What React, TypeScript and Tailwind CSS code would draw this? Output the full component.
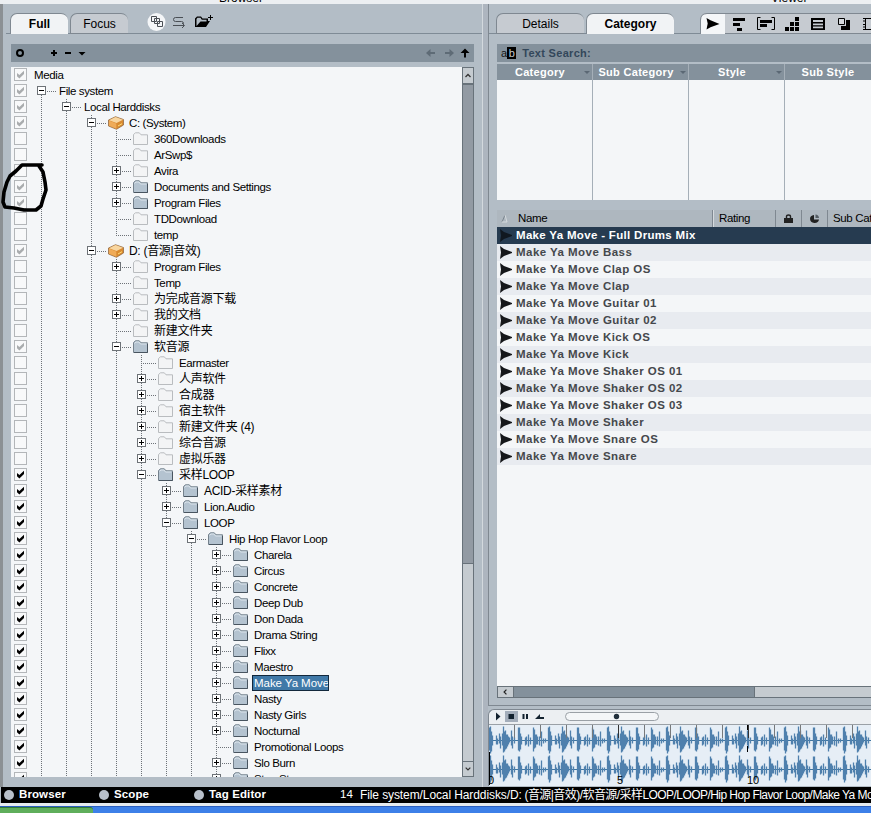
import React from 'react';
import { clsx } from 'clsx';

type Check = 'off' | 'partial' | 'on';
type Icon = 'none' | 'drive' | 'empty' | 'folder';

interface Node {
  level: number;
  label: string;
  icon: Icon;
  check: Check;
  sign?: '+' | '-';
  last?: boolean;
}

const n = (level: number, label: string, icon: Icon, check: Check, sign?: '+' | '-', last?: boolean): Node => ({
  level, label, icon, check, sign, last,
});

const nodes: Node[] = [
  n(0, 'Media', 'none', 'partial'),
  n(1, 'File system', 'none', 'partial', '-'),
  n(2, 'Local Harddisks', 'none', 'partial', '-'),
  n(3, 'C: (System)', 'drive', 'partial', '-'),
  n(4, '360Downloads', 'empty', 'off'),
  n(4, 'ArSwp$', 'empty', 'off'),
  n(4, 'Avira', 'empty', 'off', '+'),
  n(4, 'Documents and Settings', 'folder', 'partial', '+'),
  n(4, 'Program Files', 'folder', 'partial', '+'),
  n(4, 'TDDownload', 'empty', 'off'),
  n(4, 'temp', 'empty', 'off', undefined, true),
  n(3, 'D: (音源|音效)', 'drive', 'partial', '-'),
  n(4, 'Program Files', 'empty', 'off', '+'),
  n(4, 'Temp', 'empty', 'off'),
  n(4, '为完成音源下载', 'empty', 'off', '+'),
  n(4, '我的文档', 'empty', 'off', '+'),
  n(4, '新建文件夹', 'empty', 'off'),
  n(4, '软音源', 'folder', 'partial', '-'),
  n(5, 'Earmaster', 'empty', 'off'),
  n(5, '人声软件', 'empty', 'off', '+'),
  n(5, '合成器', 'empty', 'off', '+'),
  n(5, '宿主软件', 'empty', 'off', '+'),
  n(5, '新建文件夹 (4)', 'empty', 'off', '+'),
  n(5, '综合音源', 'empty', 'off', '+'),
  n(5, '虚拟乐器', 'empty', 'off', '+'),
  n(5, '采样LOOP', 'folder', 'on', '-'),
  n(6, 'ACID-采样素材', 'folder', 'on', '+'),
  n(6, 'Lion.Audio', 'folder', 'on', '+'),
  n(6, 'LOOP', 'folder', 'on', '-'),
  n(7, 'Hip Hop Flavor Loop', 'folder', 'on', '-'),
  n(8, 'Charela', 'folder', 'on', '+'),
  n(8, 'Circus', 'folder', 'on', '+'),
  n(8, 'Concrete', 'folder', 'on', '+'),
  n(8, 'Deep Dub', 'folder', 'on', '+'),
  n(8, 'Don Dada', 'folder', 'on', '+'),
  n(8, 'Drama String', 'folder', 'on', '+'),
  n(8, 'Flixx', 'folder', 'on', '+'),
  n(8, 'Maestro', 'folder', 'on', '+'),
  n(8, 'Make Ya Move', 'folder', 'on', '+'),
  n(8, 'Nasty', 'folder', 'on', '+'),
  n(8, 'Nasty Girls', 'folder', 'on', '+'),
  n(8, 'Nocturnal', 'folder', 'on', '+'),
  n(8, 'Promotional Loops', 'folder', 'on'),
  n(8, 'Slo Burn', 'folder', 'on', '+'),
  n(8, 'Stop Stress', 'folder', 'on', '+'),
];

const files = [
  'Make Ya Move - Full Drums Mix',
  'Make Ya Move Bass',
  'Make Ya Move Clap OS',
  'Make Ya Move Clap',
  'Make Ya Move Guitar 01',
  'Make Ya Move Guitar 02',
  'Make Ya Move Kick OS',
  'Make Ya Move Kick',
  'Make Ya Move Shaker OS 01',
  'Make Ya Move Shaker OS 02',
  'Make Ya Move Shaker OS 03',
  'Make Ya Move Shaker',
  'Make Ya Move Snare OS',
  'Make Ya Move Snare',
];

const dotsV = 'bg-[repeating-linear-gradient(to_bottom,#6d7278_0_1px,transparent_1px_2px)]';
const dotsH = 'bg-[repeating-linear-gradient(to_right,#6d7278_0_1px,transparent_1px_2px)]';

function CheckBox({ state }: { state: Check }) {
  return (
    <div className="w-[13px] h-[13px] mt-px ml-[3px] shrink-0 border border-[#b3b6b9] bg-[#f8f9fa]">
      {state !== 'off' && (
        <svg width="11" height="11" viewBox="0 0 11 11" className="block">
          <path d="M2 4 L4.4 6 L9 1.8 V5 L4.4 9.4 L2 7.2 Z" fill={state === 'on' ? '#000' : '#a9acae'} />
        </svg>
      )}
    </div>
  );
}

function Folder({ open }: { open: boolean }) {
  return (
    <svg width="16" height="14" viewBox="0 0 16 14" className="shrink-0">
      <path
        d="M.5 12.5 V2.5 L2.5 .8 H6.3 L8 2.8 H14.5 V12.5 Z"
        fill={open ? '#b4c3d0' : '#f3f4f5'}
        stroke={open ? '#74818c' : '#b9bcbf'}
      />
      {open && <path d="M1.5 3.5 L3 2 H6 L7.5 4 H13.5" fill="none" stroke="#dbe4eb" />}
      {open && <path d="M1 12.500 H14.500 V4" fill="none" stroke="#48545f" />}
    </svg>
  );
}

function Drive() {
  return (
    <svg width="16" height="14" viewBox="0 0 16 14" className="shrink-0">
      <path d="M0.5 4 L7.5 .7 L15.5 3.5 V9 L8.5 13.3 L.5 10 Z" fill="#d98a30" stroke="#8a6038" strokeWidth=".7" />
      <path d="M1 4.2 L7.5 1 L15 3.7 L8.5 7 Z" fill="#f8d6a0" />
      <path d="M1 4.6 L8.3 7.4 V12.8 L1 9.7 Z" fill="#efab58" />
      <path d="M10 10 L14 7.7" stroke="#ffe07a" />
    </svg>
  );
}

function Branch({ node }: { node: Node }) {
  return (
    <div className={clsx('relative h-4 shrink-0', node.icon === 'none' ? 'w-[22px]' : 'w-[21px]')}>
      {node.level > 1 && <i className={clsx('absolute left-1 top-0 w-px h-2', dotsV)} />}
      {!node.last && <i className={clsx('absolute left-1 top-2 w-px h-2', dotsV)} />}
      <i className={clsx('absolute left-1 top-2 h-px w-[15px]', dotsH)} />
      {node.sign && (
        <svg width="9" height="9" viewBox="0 0 9 9" className="absolute left-0 top-[3px]">
          <rect x=".5" y=".5" width="8" height="8" fill="#fff" stroke="#6d7277" />
          <path d={node.sign === '+' ? 'M2 4.5h5M4.5 2v5' : 'M2 4.5h5'} stroke="#000" />
        </svg>
      )}
    </div>
  );
}

function TreeRow({ node }: { node: Node }) {
  const selected = node.label === 'Make Ya Move';
  const cjk = /[\u4e00-\u9fff]/.test(node.label);
  return (
    <div className="flex h-4 shrink-0">
      <CheckBox state={node.check} />
      <div className={clsx('shrink-0', node.level === 0 ? 'w-[7px]' : 'w-[10px]')} />
      {Array.from({ length: Math.max(0, node.level - 1) }, (_, i) => (
        <div key={i} className="w-[25px] h-4 pl-1 shrink-0">
          <div className={clsx('w-px h-4', dotsV)} />
        </div>
      ))}
      {node.level > 0 && <Branch node={node} />}
      {node.icon !== 'none' && (
        <div className="w-[19px] pt-px shrink-0 flex">
          {node.icon === 'drive' ? <Drive /> : <Folder open={node.icon === 'folder'} />}
        </div>
      )}
      <span
        className={clsx(
          'h-4 leading-4 whitespace-nowrap',
          cjk ? 'text-[12px] tracking-[-0.3px]' : 'text-[11.5px]',
          !cjk && (selected ? 'tracking-[-0.05px]' : 'tracking-[-0.38px]'),
          node.icon !== 'none' && 'pl-[2px]',
          selected && 'bg-[#4079a8] text-white outline outline-1 -outline-offset-1 outline-[#12283c]'
        )}
      >
        {node.label}
      </span>
    </div>
  );
}

function Tab({ label, active, className }: { label: string; active?: boolean; className: string }) {
  return (
    <div
      className={clsx(
        'h-[21px] rounded-t-[7px] border-t border-l border-[#7f8891] text-center leading-[21px] text-[12px]',
        active ? 'bg-[#f1f3f5] font-bold' : 'bg-[#c6cbd1] border-b',
        className
      )}
    >
      {label}
    </div>
  );
}

function BrowserPanel() {
  return (
    <section className="w-[482px] h-[783px] shrink-0 flex flex-col bg-[#b3bdc6] border-l-[3px] border-[#8b9094] pl-2">
      <div className="h-[30px] flex pt-[9px] border-b border-[#7f8b96] -ml-[5px] pl-1">
        <Tab label="Full" active className="w-[58px]" />
        <Tab label="Focus" className="w-[58px] ml-[2px]" />
        <svg width="90" height="21" viewBox="0 0 90 21" className="ml-[14px]">
          <circle cx="14.500" cy="9" r="9" fill="#f4f6f8" />
          <g fill="none" stroke="#4a4f55">
            <path d="M9.500 3.500h5v5h-5zM12.500 5.500h5v5h-5zM15.500 8.500h5v5h-5z" />
            <path d="M41 4.500h-7.500q-2 0-2 2t2 2h6q2 0 2 2v1M31 12.500h11" />
            <path d="M40 10l2.500 2.500-2.500 2.500" />
          </g>
          <path d="M53 14V5.500l2-2h4l1.500 2h5.500V8h2l-4 6z" fill="#000" />
          <path d="M54.500 6l1-1.300h3l1.300 2h4.700v1.800h-6l-4 4.500z" fill="#b3bdc6" />
          <path d="M68.500 2v5M66 4.500h5" stroke="#000" />
        </svg>
      </div>
      <div className="h-[18px] mt-[10px] w-[463px] bg-[#84919c]">
        <svg width="463" height="18" viewBox="0 0 463 18">
          <circle cx="9" cy="9" r="3" fill="none" stroke="#000" strokeWidth="2" />
          <path d="M40 9h6M43 6v6M54 9h6" stroke="#000" strokeWidth="2" />
          <path d="M67.500 8h7l-3.500 3.500z" />
          <path d="M419 5v3h-4v0l-.5 1 5 4.500v-3.500h4.500v-2h-4.500v-3z" fill="none" />
          <path d="M419.500 5l-4.500 4 4.500 4v-3h4.500v-2h-4.500zM438.500 5l4.500 4-4.500 4v-3h-4.500v-2h4.500z" fill="#5e6b76" />
          <path d="M454 4.500l4.500 4.500h-3.500v4.500h-2v-4.500h-3.500z" />
        </svg>
      </div>
      <div className="h-[710px] mt-[5px] w-[463px] flex">
        <div className="flex-1 bg-[#f4f6f8] overflow-hidden flex flex-col">
          {nodes.map((node, i) => (
            <TreeRow key={i} node={node} />
          ))}
        </div>
        <div className="w-3 flex flex-col border border-[#68727a] bg-[#c5cbd0]">
          <svg width="10" height="15" viewBox="0 0 10 15" className="shrink-0">
            <path d="M2.500 9l2.500-2.500 2.500 2.500" fill="none" stroke="#333" strokeWidth="1.300" />
          </svg>
          <div className="h-[481px] bg-[#929aa3] border-t-2 border-b border-[#68727a]" />
          <div className="flex-1" />
          <svg width="10" height="15" viewBox="0 0 10 15" className="shrink-0 border-t border-[#68727a]">
            <path d="M2.500 6l2.500 2.500 2.500-2.500" fill="none" stroke="#333" strokeWidth="1.300" />
          </svg>
        </div>
      </div>
    </section>
  );
}

function ViewToolbar() {
  return (
    <svg width="171" height="21" viewBox="0 0 171 21" className="ml-[26px] shrink-0">
      <path d="M0 21V7q0-7 7-7H171V21z" fill="#c6cbd1" />
      <path d="M1 21V7q0-6 6-6H25V21z" fill="#f4f6f8" />
      <path d="M.5 21V7q0-6.500 6.500-6.500H171" fill="none" stroke="#7f8891" />
      <path d="M25 20.500H171" stroke="#7f8891" />
      <path d="M6.500 5l4 2.300 9 3.700-9 3.300-4 2.200 1.200-6z" />
      <path d="M33 5h12v3H33zM33 10h7v3h-7zM37 15h5v3h-5z" />
      <path d="M60.500 4.500h-3v12h3M71.500 4.500h3v12h-3" fill="none" stroke="#000" />
      <path d="M60 7h12v3H60zM60 11h7v3h-7z" />
      <path d="M85 14h4v4h-4zM90 14h4v4h-4zM95 14h4v4h-4zM90 9h4v4h-4zM95 9h4v4h-4zM95 4h4v4h-4z" />
      <path d="M111 5h14v12h-14zM113 7v2h10v-2zM113 10.500v1.700h10v-1.700zM113 13.600v1.700h10v-1.700z" fillRule="evenodd" />
      <path d="M146 7h4v10h-9v-4h5z" />
      <path d="M138.500 5.500h6v6h-6z" fill="#d6dade" stroke="#000" />
      <path d="M163 5.500h8M163 16.500h8M165.500 5v12M163 8h2M163 11.500h2M163 14h2" fill="none" stroke="#000" />
    </svg>
  );
}

function FilterColumn({ label }: { label: string }) {
  return (
    <div className="w-24 h-full flex flex-col shrink-0 border-r border-[#a5afb8]">
      <div className="h-4 bg-[#84919c] text-white font-bold text-[11px] leading-4 flex items-center whitespace-nowrap tracking-[0.3px]">
        <span className="flex-1 text-center">{label}</span>
        <svg width="9" height="5" viewBox="0 0 9 5" className="shrink-0">
          <path d="M1 1h6l-3 3z" fill="#5b6874" />
        </svg>
      </div>
      <div className="flex-1 bg-[#f4f6f8]" />
    </div>
  );
}

function ViewerPanel() {
  return (
    <section className="h-[702px] flex flex-col bg-[#b3bdc6] border-l border-b border-[#7f8891] overflow-hidden">
      <div className="h-[30px] flex pt-[9px] pl-[7px] border-b border-[#7f8b96] shrink-0">
        <Tab label="Details" className="w-[88px]" />
        <Tab label="Category" active className="w-[88px] ml-[2px]" />
        <ViewToolbar />
      </div>
      <div className="ml-2 mt-[10px] h-[18px] shrink-0 bg-[#84919c] flex items-center text-[11px] font-bold">
        <span className="ml-1 text-[#111] font-normal leading-3">a</span>
        <span className="bg-black text-[#c5ccd2] font-normal leading-[12px] px-[1.5px]">b</span>
        <span className="ml-[6px] text-[#33475a] tracking-[0.3px]">Text Search:</span>
      </div>
      <div className="ml-2 mt-[2px] h-[136px] shrink-0 flex overflow-hidden">
        <FilterColumn label="Category" />
        <FilterColumn label="Sub Category" />
        <FilterColumn label="Style" />
        <FilterColumn label="Sub Style" />
      </div>
      <div className="ml-2 mt-[10px] h-[17px] shrink-0 flex bg-[#aeb7bf] text-[11.5px] leading-[17px] tracking-[-0.35px] overflow-hidden whitespace-nowrap">
        <svg width="21" height="17" viewBox="0 0 21 17" className="shrink-0">
          <path d="M5 12l3-7" stroke="#7b858e" />
          <path d="M8 5l2 7H5" fill="none" stroke="#d5dade" />
        </svg>
        <div className="w-[195px] shrink-0 border-r border-[#7f8891]">Name</div>
        <div className="w-[63px] shrink-0 border-l border-[#d5dade] border-r border-r-[#7f8891] pl-[5px]">Rating</div>
        <div className="w-[26px] shrink-0 border-r border-r-[#7f8891] flex items-center justify-center">
          <svg width="9" height="10" viewBox="0 0 9 10">
            <path d="M0 4h9v5H0z" fill="#222" />
            <path d="M2.500 4V2.500q0-1.500 2-1.500t2 1.500V4" fill="none" stroke="#222" strokeWidth="1.400" />
          </svg>
        </div>
        <div className="w-[26px] shrink-0 border-r border-r-[#7f8891] flex items-center justify-center">
          <svg width="9" height="10" viewBox="0 0 9 10">
            <path d="M4 1v4.500h5A4.500 4 0 1 1 4 1z" fill="#222" />
            <path d="M5.500 .5a4 4 0 0 1 3.500 3.500h-3.500z" fill="#555d64" />
          </svg>
        </div>
        <div className="pl-[5px]">Sub Category</div>
      </div>
      <div className="ml-2 h-[459px] shrink-0 bg-[#f4f6f8] text-[11.5px] font-bold">
        {files.map((file, i) => (
          <div
            key={file}
            className={clsx(
              'h-[17px] flex items-center whitespace-nowrap',
              i === 0 ? 'bg-[#263b50] text-white tracking-[0.32px]' : 'text-[#45484c] tracking-[0.46px]',
              i > 0 && (i % 2 ? 'bg-[#e8ebf0]' : 'bg-[#f4f6f8]')
            )}
          >
            <svg width="19" height="15" viewBox="0 0 19 15" className="shrink-0">
              <path d="M3 1l4 3 8 3v1l-8 3-4 3 1-6.500z" fill={i === 0 ? '#101820' : '#15171a'} />
            </svg>
            {file}
          </div>
        ))}
      </div>
      <div className="ml-2 h-3 shrink-0 flex border border-r-0 border-[#68727a] bg-[#c5cbd0]">
        <svg width="16" height="10" viewBox="0 0 16 10" className="border-r border-[#68727a]">
          <path d="M9 2.500l-2.500 2.500 2.500 2.500" fill="none" stroke="#222" strokeWidth="1.300" />
        </svg>
        <div className="w-[241px] bg-[#84919c] border-r border-[#68727a]" />
      </div>
    </section>
  );
}

// one bar of the loop: [offset, peak above, peak below]
const bar: [number, number, number][] = [
  [0, 13, 10], [1, 14, 13], [2, 9, 11], [3, 5, 5], [7, 5, 4], [8, 2, 4], [10, 7, 3], [11, 4, 8], [13, 7, 5],
  [14, 14, 12], [15, 9, 11], [16, 10, 9], [17, 6, 8], [18, 6, 6], [19, 4, 4], [20, 3, 2], [22, 10, 5], [23, 4, 8],
  [25, 3, 3], [29, 13, 10], [30, 13, 11], [31, 7, 9], [32, 4, 4], [36, 3, 5], [37, 4, 4], [39, 6, 6], [41, 3, 4],
  [44, 13, 11], [45, 11, 8], [46, 6, 7], [47, 6, 4], [48, 4, 4], [50, 4, 5], [52, 9, 6], [54, 2, 3], [56, 2, 2],
];

function wave(cy: number) {
  let d = '';
  for (let start = 0; start < 383; start += 59) {
    for (const [x, up, down] of bar) {
      d += `M${start + x + 0.5} ${cy - up}V${cy + down}`;
    }
  }
  return d;
}

function PlayerPanel() {
  return (
    <section className="mt-[3px] h-[77px] bg-[#eceff2] border-l border-t border-[#7f8891] rounded-tl-[6px] overflow-hidden shrink-0">
      <svg width="382" height="77" viewBox="0 0 382 77" className="block">
        <path d="M7 2.500l4.500 4-4.500 4z" fill="#13222f" />
        <path d="M16 1h13v11H16z" fill="#a4aebb" />
        <path d="M19.500 4h5.500v5h-5.500zM33.500 4h2v5h-2zM37 4h2v5h-2zM46 9l5-5v3h4v2z" fill="#13222f" />
        <rect x="76.500" y="2.500" width="93" height="8" rx="4" fill="#f4f6f8" stroke="#9aa0a6" />
        <circle cx="127.500" cy="6.500" r="2.700" fill="#22303c" />
        <path d="M0 15h382v61H0z" fill="#e6eef6" />
        <path d="M0 14.500h382" stroke="#9aa0a6" />
        <path d="M0 30.500h382M0 59.500h382" stroke="#3e749f" />
        <path d={wave(30.5)} stroke="#4f80ad" strokeWidth="1.300" />
        <path d={wave(59.5)} stroke="#4f80ad" strokeWidth="1.300" />
        {Array.from({ length: 14 }, (_, i) => (
          <path key={i} d={`M${26 * i + 25.5} 15v13`} stroke={i % 5 === 4 ? '#333' : '#77797b'} />
        ))}
        <path d="M.5 42v33M258.500 15v5M258.500 36v6" stroke="#000" />
        <g fontSize="11" fontFamily="Liberation Sans">
          <text x="-1" y="74">0</text>
          <text x="128" y="74">5</text>
          <text x="258" y="74">10</text>
        </g>
      </svg>
    </section>
  );
}

function StatusItem({ label, className }: { label: string; className: string }) {
  return (
    <div className={clsx('flex items-center shrink-0 font-bold pl-[3px] tracking-[0.1px]', className)}>
      <div className="w-[10px] h-[10px] rounded-full bg-[#b8c0ca] mr-[5px]" />
      {label}
    </div>
  );
}

export default function App() {
  return (
    <div className="relative w-[871px] h-[813px] overflow-hidden flex flex-col bg-[#b3bdc6] text-black font-['Liberation_Sans','Noto_Sans_CJK_SC',sans-serif]">
      <header className="h-1 shrink-0 overflow-hidden bg-[#eceff2] flex text-[12px] whitespace-nowrap">
        <div className="w-[482px] -mt-[8px] leading-3 text-center">Browser</div>
        <div className="w-[389px] -mt-[8px] leading-3 pl-[289px]">Viewer</div>
      </header>

      <main className="h-[783px] flex shrink-0">
        <BrowserPanel />
        <div className="w-[6px] shrink-0 bg-[#adb5bf] border-l border-[#d3d9de]" />
        <div className="flex-1 min-w-0 flex flex-col">
          <ViewerPanel />
          <PlayerPanel />
        </div>
      </main>

      <footer className="h-4 shrink-0 ml-px bg-black text-white text-[11.5px] flex items-center whitespace-nowrap overflow-hidden">
        <StatusItem label="Browser" className="w-[95px]" />
        <StatusItem label="Scope" className="w-[95px]" />
        <StatusItem label="Tag Editor" className="w-[149px]" />
        <span className="w-[20px] shrink-0">14</span>
        <span className="text-[12px] tracking-[-0.1px]">File system/Local Harddisks/D:</span>
        <span className="text-[12px] tracking-[-0.56px] whitespace-pre">
          {' (音源|音效)/软音源/采样LOOP/LOOP/Hip Hop Flavor Loop/Make Ya Move'}
        </span>
      </footer>
      <div className="h-[3px] shrink-0 bg-[#e6ebef]" />
      <div className="flex-1 flex bg-[#3d80e8] border-t border-[#2b5fc0]">
        <div className="w-[93px] bg-[#5fae5b] border-t border-[#2f7a35] rounded-tr-[3px]" />
      </div>

      {/* hand-drawn marker loop */}
      <svg width="60" height="60" viewBox="0 0 60 60" className="absolute left-0 top-[158px]">
        <path
          d="M42 7 H22 L16 13 L10 18 L7 24 L4 34 L3 44 L5 49 L14 50 L24 52 H36 L41 48 L43 41 L46 32 L45 24 L43 14 L39 8"
          fill="none"
          stroke="#000"
          strokeWidth="3.600"
          strokeLinecap="round"
          strokeLinejoin="round"
        />
      </svg>
    </div>
  );
}
